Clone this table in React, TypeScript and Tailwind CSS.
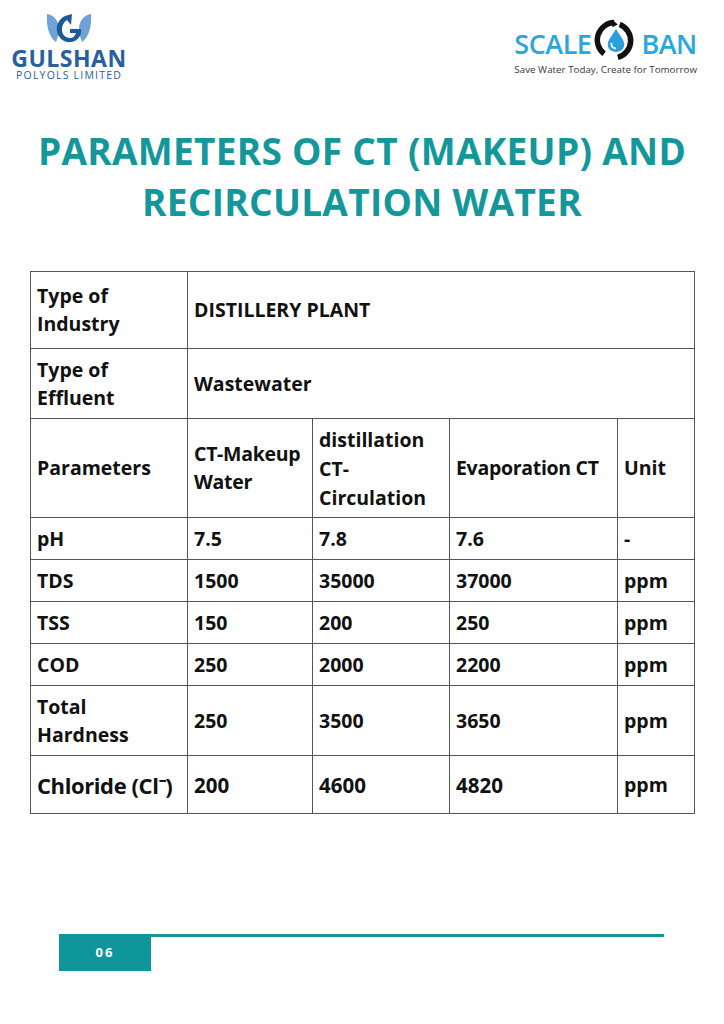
import React from "react";

const rows: { name: React.ReactNode; vals: string[]; unit: string; h: string; big?: boolean }[] = [
  { name: "pH", vals: ["7.5", "7.8", "7.6"], unit: "-", h: "h-[42px]" },
  { name: "TDS", vals: ["1500", "35000", "37000"], unit: "ppm", h: "h-[42px]" },
  { name: "TSS", vals: ["150", "200", "250"], unit: "ppm", h: "h-[42px]" },
  { name: "COD", vals: ["250", "2000", "2200"], unit: "ppm", h: "h-[42px]" },
  { name: <>Total<br />Hardness</>, vals: ["250", "3500", "3650"], unit: "ppm", h: "h-[70px]" },
  { name: <>Chloride (Cl⁻)</>, vals: ["200", "4600", "4820"], unit: "ppm", h: "h-[58px]", big: true },
];

function GulshanLogo() {
  return (
    <div className="flex flex-col items-center w-[112px]">
      <svg width="48" height="32" viewBox="0 0 48 32">
        <path d="M2 2 C9 3 14 9 14 17 C14 23 12 27 11 30 C5 26 1 16 2 2 Z" fill="#6fa3d8" />
        <path d="M46 2 C39 3 34 9 34 17 C34 23 36 27 37 30 C43 26 47 16 46 2 Z" fill="#6fa3d8" />
        <path d="M20 4 C14 7 11 13 12 19 C13 26 19 31 26 30 C33 29 37 23 36 17 L25 17 L25 21 L31 21 C30 24 28 26 25 26 C20 26 17 22 17 18 C17 13 19 10 22 8 L26 13 L27 2 Z" fill="#1e5a99" />
      </svg>
      <div className="text-[#27609e] font-bold text-[23px] leading-[20px] tracking-[0.5px] mt-[4px]" style={{ fontFamily: '"Open Sans", sans-serif' }}>GULSHAN</div>
      <div className="text-[#27609e] text-[10.5px] leading-[11px] tracking-[1.2px] mt-[2px]" style={{ fontFamily: '"Open Sans", sans-serif' }}>POLYOLS LIMITED</div>
    </div>
  );
}

function ScaleBanLogo() {
  return (
    <div className="flex flex-col items-start">
      <div className="flex items-center h-[46px]">
        <span className="text-[#2aa6df] text-[27px] font-semibold leading-none tracking-[-0.5px] mt-[6px]" style={{ fontFamily: '"Open Sans", sans-serif' }}>SCALE</span>
        <svg width="44" height="46" viewBox="0 0 48 46" className="mx-[3px]">
          <path d="M22 4 A19 19 0 0 0 11 38" stroke="#111" strokeWidth="6" fill="none" />
          <path d="M26 6 L20 1 L20 9 Z" fill="#111" />
          <path d="M28 6 A19 19 0 0 1 26 42" stroke="#111" strokeWidth="6" fill="none" />
          <path d="M24 11 C20 18 15 23 15 28 C15 33 19 36 24 36 C29 36 33 33 33 28 C33 23 28 18 24 11 Z" fill="#2b9fde" />
          <path d="M19 27 C19 30 21 32 23 32" stroke="#fff" strokeWidth="2" fill="none" strokeLinecap="round" />
        </svg>
        <span className="text-[#2aa6df] text-[27px] font-semibold leading-none tracking-[-0.5px] mt-[6px]" style={{ fontFamily: '"Open Sans", sans-serif' }}>BAN</span>
      </div>
      <div className="text-[#3a3a3a] text-[9.8px] leading-[12px] mt-[1px]" style={{ fontFamily: '"Open Sans", sans-serif' }}>Save Water Today, Create for Tomorrow</div>
    </div>
  );
}

export default function App() {
  const cell = "border border-[#555] px-[6px] align-middle";
  return (
    <div className="w-[724px] h-[1024px] bg-white relative overflow-hidden" style={{ fontFamily: '"Open Sans", sans-serif' }}>
      <div className="flex justify-between items-start pt-[12px] pl-[13px] pr-[27px]">
        <GulshanLogo />
        <div className="pt-[5px]"><ScaleBanLogo /></div>
      </div>
      <h1 className="mt-[44px] text-center text-[#14979b] font-bold text-[37px] leading-[51px] tracking-[0.3px]">
        PARAMETERS OF CT (MAKEUP) AND<br />RECIRCULATION WATER
      </h1>
      <table className="ml-[30px] mt-[44px] w-[664px] table-fixed border-collapse text-[#111] font-bold text-[19.5px] leading-[28px]">
        <colgroup>
          <col className="w-[157px]" />
          <col className="w-[125px]" />
          <col className="w-[137px]" />
          <col className="w-[168px]" />
          <col className="w-[77px]" />
        </colgroup>
        <tbody>
          <tr className="h-[77px]">
            <td className={cell}>Type of<br />Industry</td>
            <td className={cell} colSpan={4}>DISTILLERY PLANT</td>
          </tr>
          <tr className="h-[70px]">
            <td className={cell}>Type of<br />Effluent</td>
            <td className={cell} colSpan={4}>Wastewater</td>
          </tr>
          <tr className="h-[99px]">
            <td className={cell}>Parameters</td>
            <td className={cell + " tracking-[-0.3px]"}>CT-Makeup<br />Water</td>
            <td className={cell + " leading-[29px]"}>distillation<br />CT-<br />Circulation</td>
            <td className={cell + " tracking-[-0.3px]"}>Evaporation CT</td>
            <td className={cell}>Unit</td>
          </tr>
          {rows.map((r, i) => (
            <tr key={i} className={r.h}>
              <td className={cell + (r.big ? " text-[22px] tracking-[-0.4px]" : "")}>{r.name}</td>
              {r.vals.map((v, j) => (
                <td key={j} className={cell + (r.big ? " text-[20.5px]" : "")}>{v}</td>
              ))}
              <td className={cell}>{r.unit}</td>
            </tr>
          ))}
        </tbody>
      </table>
      <div className="absolute left-[59px] top-[934px] flex items-start">
        <div className="w-[92px] h-[37px] bg-[#0f969a] flex items-center justify-center text-white font-bold text-[13px] tracking-[2px]">06</div>
        <div className="w-[513px] h-[3px] bg-[#1a9498]" />
      </div>
    </div>
  );
}
